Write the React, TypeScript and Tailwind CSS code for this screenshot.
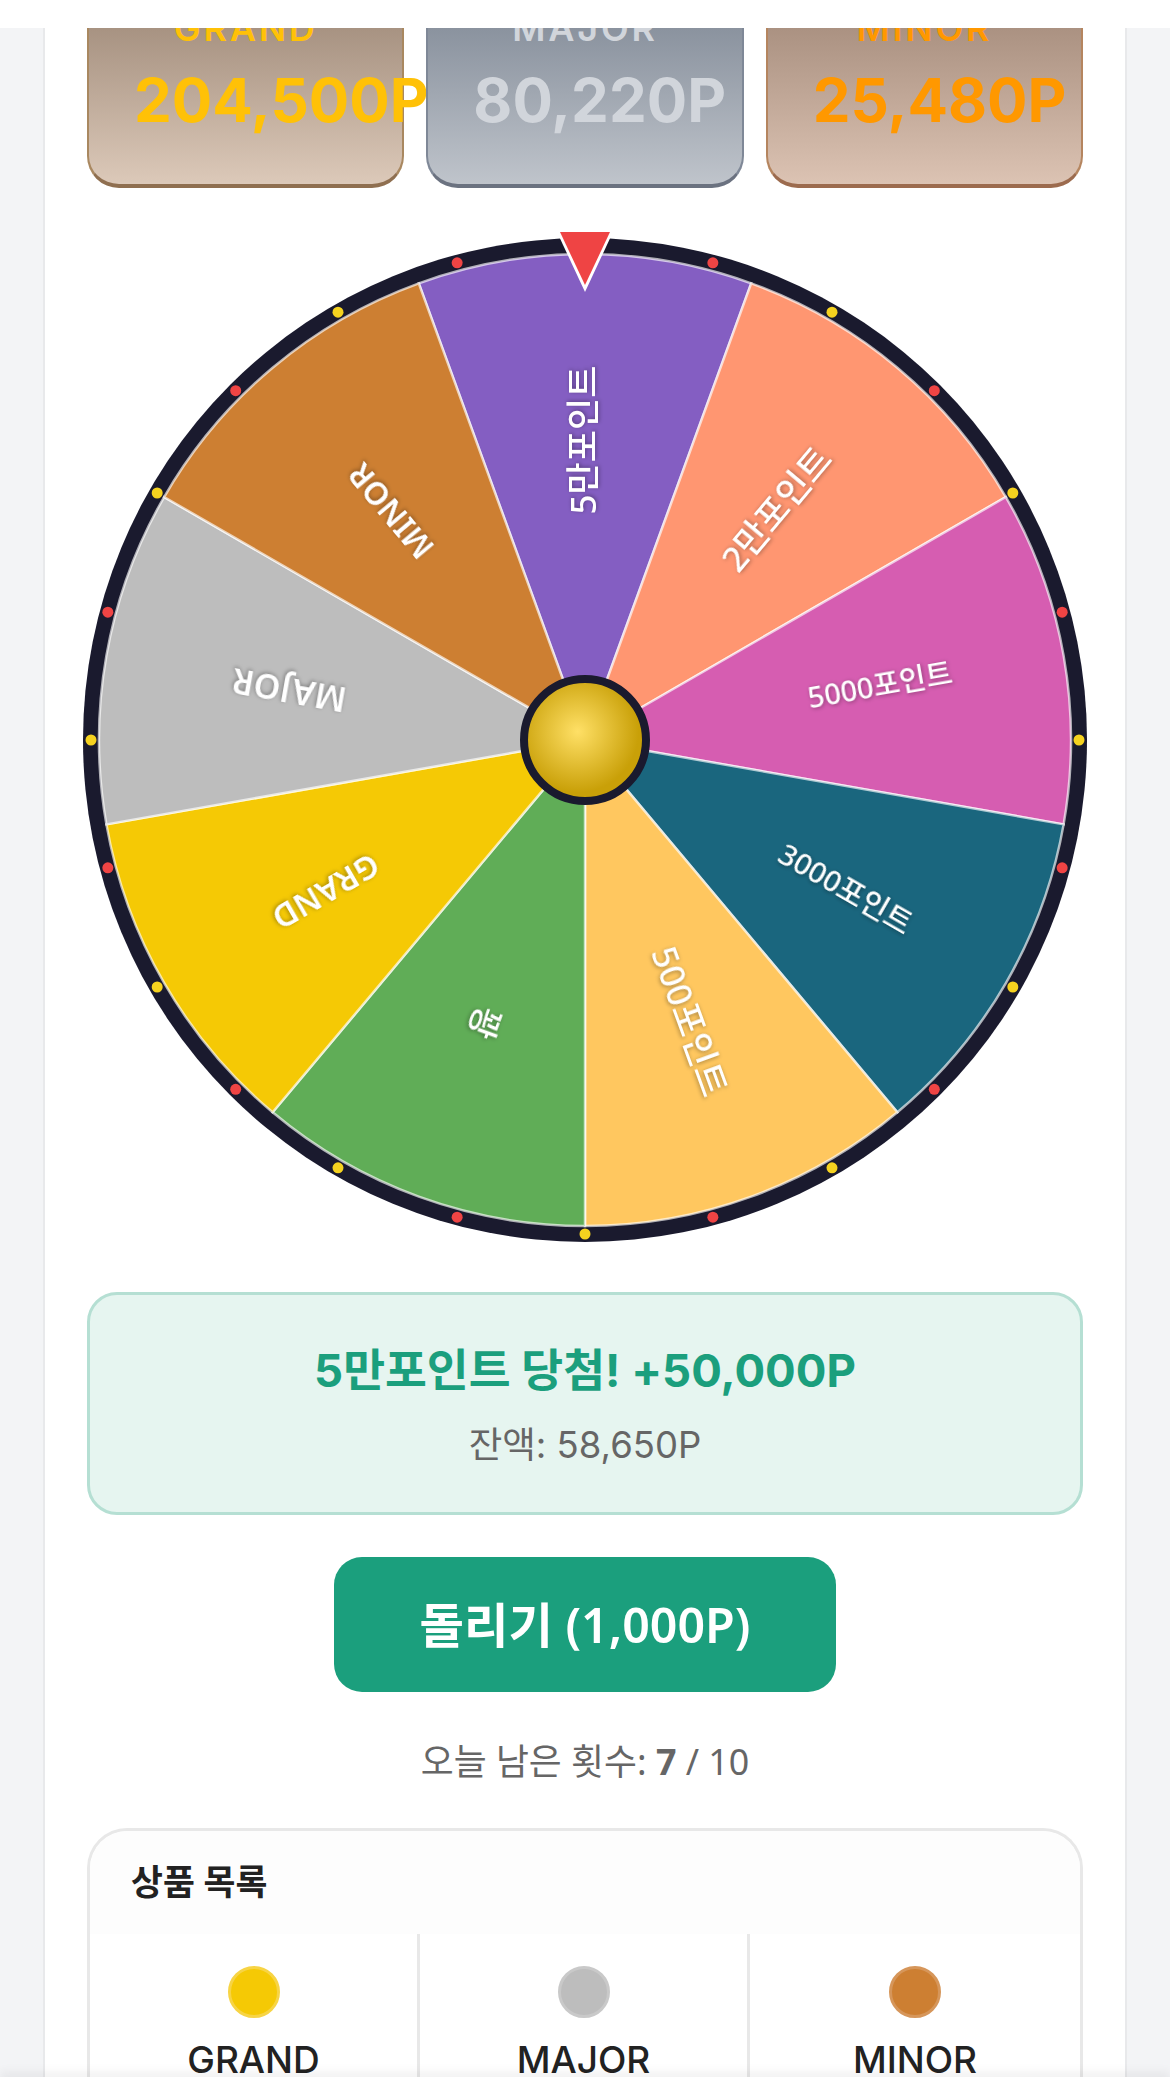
const UI_FONT = "font-['Inter','Noto_Sans_CJK_KR',sans-serif]";

const jackpots = [
  {
    name: "GRAND",
    amount: "204,500P",
    card: "bg-gradient-to-b from-[#9b8675] to-[#dcc9b9] border-[#a98860] border-b-[#8f6f50]",
    text: "text-[#ffc107]",
  },
  {
    name: "MAJOR",
    amount: "80,220P",
    card: "bg-gradient-to-b from-[#7e8794] to-[#bfc4cb] border-[#7f8897] border-b-[#6b7280]",
    text: "text-[#d1d5db]",
  },
  {
    name: "MINOR",
    amount: "25,480P",
    card: "bg-gradient-to-b from-[#9f8676] to-[#dcc3b3] border-[#b5855f] border-b-[#9c6b4e]",
    text: "text-[#ff9800]",
  },
];

const segments = [
  { label: "5만포인트", color: "#845ec2", size: 35, weight: 500 },
  { label: "2만포인트", color: "#ff9671", size: 35, weight: 500 },
  { label: "5000포인트", color: "#d65db1", size: 29, weight: 500 },
  { label: "3000포인트", color: "#1a667e", size: 29.5, weight: 500 },
  { label: "500포인트", color: "#ffc75f", size: 35, weight: 500 },
  { label: "꽝", color: "#60ad57", size: 34, weight: 500 },
  { label: "GRAND", color: "#f5c905", size: 33, weight: 600 },
  { label: "MAJOR", color: "#bdbdbd", size: 34, weight: 600 },
  { label: "MINOR", color: "#cd7f32", size: 32, weight: 600 },
];

const prizes = [
  { name: "GRAND", dot: "bg-[#f5c905] border-[#f7d445]" },
  { name: "MAJOR", dot: "bg-[#bdbdbd] border-[#c9c9c9]" },
  { name: "MINOR", dot: "bg-[#cd7f32] border-[#d6965a]" },
];

const C = 512;
const R_OUTER = 502;
const R_INNER = 486;

function polar(r: number, deg: number) {
  const a = ((deg - 90) * Math.PI) / 180;
  return [C + r * Math.cos(a), C + r * Math.sin(a)];
}

function Wheel() {
  return (
    <svg viewBox="0 0 1024 1024" className="-mx-[14px] block h-[1024px] w-[1024px] max-w-none">
      <defs>
        <radialGradient id="hub" cx="0.44" cy="0.43" r="0.5">
          <stop offset="0" stopColor="#ffe066" />
          <stop offset="1" stopColor="#c9a008" />
        </radialGradient>
      </defs>
      <circle cx={C} cy={C} r={R_OUTER} fill="#1a1a2e" />
      {segments.map((s, i) => {
        const mid = i * 40;
        const [x1, y1] = polar(R_INNER, mid - 20);
        const [x2, y2] = polar(R_INNER, mid + 20);
        return (
          <path
            key={s.label}
            d={`M${C} ${C}L${x1} ${y1}A${R_INNER} ${R_INNER} 0 0 1 ${x2} ${y2}Z`}
            fill={s.color}
            stroke="#ffffff"
            strokeOpacity="0.65"
            strokeWidth="2.5"
          />
        );
      })}
      {segments.map((s, i) => {
        const mid = i * 40;
        return (
          <text
            key={s.label}
            x={C + 300}
            y={C - 3}
            transform={`rotate(${mid - 90} ${C} ${C})`}
            textAnchor="middle"
            dominantBaseline="central"
            fontSize={s.size}
            fontWeight={s.weight}
            fill="#ffffff"
            className="font-['Noto_Sans','Noto_Sans_CJK_KR',sans-serif] [filter:drop-shadow(1px_1px_2px_rgba(0,0,0,0.35))]"
          >
            {s.label}
          </text>
        );
      })}
      {Array.from({ length: 24 }, (_, i) => {
        const [x, y] = polar(494, i * 15);
        return <circle key={i} cx={x} cy={y} r="5.5" fill={i % 2 === 0 ? "#f5d21f" : "#ef4444"} />;
      })}
      <circle cx={C} cy={C} r="61" fill="url(#hub)" stroke="#1a1a2e" strokeWidth="8" />
      {/* pointer */}
      <polygon points="484,4 540,4 512,64" fill="#ffffff" />
      <polygon points="487,4 537,4 512,57" fill="#ef4444" />
    </svg>
  );
}

export default function App() {
  return (
    <div className={`flex h-[2093px] w-[1170px] flex-col overflow-hidden bg-[#f3f4f6] ${UI_FONT}`}>
      <div className="relative z-10 h-7 shrink-0 bg-white" />

      <main className="ml-[43px] min-h-0 w-[1084px] flex-1 overflow-hidden border-x-2 border-[#e8e9eb] bg-white px-[42px]">
        {/* scrolled: top of the cards sits under the header */}
        <div className="-mt-[40px] grid grid-cols-3 gap-[22px]">
          {jackpots.map((j) => (
            <div key={j.name} className={`h-[200px] rounded-[32px] border-2 border-b-4 pt-[18px] ${j.card}`}>
              <div className={`text-center text-[36px] leading-10 font-semibold tracking-[2.8px] ${j.text}`}>{j.name}</div>
              <div className={`mt-[14px] pl-[45px] text-[60px] leading-[76px] font-bold whitespace-nowrap ${j.text}`}>{j.amount}</div>
            </div>
          ))}
        </div>

        <div className="mt-10">
          <Wheel />
        </div>

        <div className="mt-10 flex h-[223px] flex-col items-center justify-center rounded-[30px] border-[3px] border-[#b5dfd3] bg-[#e6f5f0]">
          <div className="text-[45.5px] leading-[60px] font-bold text-[#1b9f7d]">5만포인트 당첨! +50,000P</div>
          <div className="mt-[22px] text-[36.5px] leading-[44px] text-[#666666]">잔액: 58,650P</div>
        </div>

        <button className="mx-auto mt-[42px] block h-[135px] w-[502px] rounded-[28px] bg-[#1b9f7d] font-['Noto_Sans','Noto_Sans_CJK_KR',sans-serif] text-[48.3px] font-semibold text-white">
          돌리기 (1,000P)
        </button>

        <div className="mt-[44px] text-center font-['Noto_Sans','Noto_Sans_CJK_KR',sans-serif] text-[35.8px] leading-[50px] text-[#666666]">
          오늘 남은 횟수: <span className="font-bold">7</span> / 10
        </div>

        <section className="mt-[42px] rounded-t-[40px] border-x-[3px] border-t-[3px] border-[#e8e8e8]">
          <h2 className="flex h-[103px] items-center rounded-t-[38px] bg-[#fdfdfd] pl-[41px] text-[34.7px] font-semibold text-[#222222]">상품 목록</h2>
          <div className="grid grid-cols-3">
            {prizes.map((p, i) => (
              <div key={p.name} className={`flex flex-col items-center pt-[32px] pb-6 ${i < 2 ? "border-r-[3px] border-[#e8e8e8]" : ""}`}>
                <span className={`block size-[52px] rounded-full border-[3px] ${p.dot}`} />
                <span className="mt-[20px] text-[37px] leading-[44px] font-medium text-[#222222]">{p.name}</span>
              </div>
            ))}
          </div>
        </section>
      </main>

      <div className="relative z-10 h-4 shrink-0 bg-white shadow-[0_-6px_10px_rgba(0,0,0,0.05)]" />
    </div>
  );
}
